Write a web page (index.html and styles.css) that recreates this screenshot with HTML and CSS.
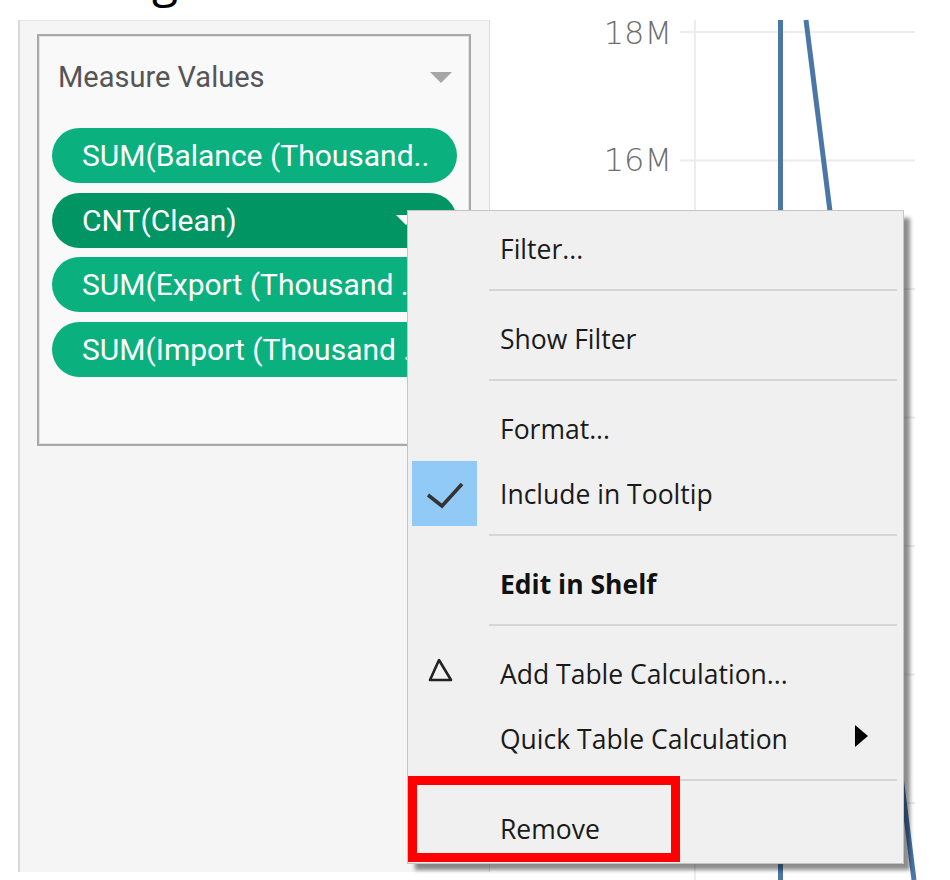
FILE: index.html
```html
<!DOCTYPE html>
<html>
<head>
<meta charset="utf-8">
<link rel="stylesheet" href="styles.css">
</head>
<body>
<div class="page">
  <div class="left">
    <div class="topstrip"><span class="heading">g</span></div>
    <div class="panel">
      <div class="card">
        <div class="card-head">
          <span class="card-title">Measure Values</span>
          <span class="caret"></span>
        </div>
        <div class="pills">
          <div class="pill"><span class="pill-text">SUM(Balance (Thousand..</span></div>
          <div class="pill active"><span class="pill-text">CNT(Clean)</span><span class="pill-caret"></span></div>
          <div class="pill"><span class="pill-text">SUM(Export (Thousand ..</span></div>
          <div class="pill"><span class="pill-text">SUM(Import (Thousand ..</span></div>
        </div>
      </div>
    </div>
  </div>
  <div class="chart">
    <svg class="chart-svg" width="460" height="880" viewBox="490 0 460 880">
      <g class="grid">
        <line x1="695" y1="20" x2="695" y2="880"/>
        <line x1="680" y1="32" x2="915" y2="32"/>
        <line x1="680" y1="160.5" x2="915" y2="160.5"/>
        <line x1="680" y1="289" x2="915" y2="289"/>
        <line x1="680" y1="417.5" x2="915" y2="417.5"/>
        <line x1="680" y1="546" x2="915" y2="546"/>
        <line x1="680" y1="674.5" x2="915" y2="674.5"/>
        <line x1="680" y1="803" x2="915" y2="803"/>
      </g>
      <text class="axis-label" x="672" y="44">18M</text>
      <text class="axis-label" x="672" y="171">16M</text>
      <line class="series" x1="780.5" y1="20" x2="780.5" y2="880"/>
      <line class="series" x1="806" y1="20" x2="914" y2="880"/>
    </svg>
  </div>

  <div class="menu">
    <div class="item"><span class="icon"></span><span class="label">Filter...</span></div>
    <div class="sep"></div>
    <div class="item"><span class="icon"></span><span class="label">Show Filter</span></div>
    <div class="sep"></div>
    <div class="item"><span class="icon"></span><span class="label">Format...</span></div>
    <div class="item"><span class="icon"><span class="checked">
      <svg width="65" height="65" viewBox="0 0 65 65"><polyline points="16,34 30,45 50,23" fill="none" stroke="#333" stroke-width="3.5"/></svg>
    </span></span><span class="label">Include in Tooltip</span></div>
    <div class="sep"></div>
    <div class="item"><span class="icon"></span><span class="label bold">Edit in Shelf</span></div>
    <div class="sep"></div>
    <div class="item"><span class="icon delta">
      <svg width="26" height="26" viewBox="0 0 26 26"><polygon points="12,2 3,22 24,22" fill="none" stroke="#222" stroke-width="2.6" stroke-linejoin="round"/></svg>
    </span><span class="label">Add Table Calculation...</span></div>
    <div class="item"><span class="icon"></span><span class="label">Quick Table Calculation</span><span class="submenu"></span></div>
    <div class="sep"></div>
    <div class="item"><span class="icon"></span><span class="label">Remove</span></div>
  </div>
  <div class="highlight-box"></div>
</div>
</body>
</html>
```
FILE: styles.css
```css
html, body {
  margin: 0;
  padding: 0;
  background: #ffffff;
}

.page {
  position: relative;
  width: 950px;
  height: 880px;
  display: flex;
  overflow: hidden;
  background: #ffffff;
}

.left {
  width: 490px;
  flex: none;
  display: flex;
  flex-direction: column;
}

.topstrip {
  height: 20px;
  overflow: hidden;
  padding-left: 152px;
}

.heading {
  display: block;
  font-family: "Open Sans", sans-serif;
  font-size: 48px;
  line-height: 48px;
  margin-top: -45px;
  color: #000;
}

.panel {
  margin-left: 18px;
  width: 469px;
  height: 851px;
  background: #f5f5f5;
  border-left: 2px solid #d9d9d9;
  border-right: 1px solid #dcdcdc;
  border-top: 1px solid #e6e6e6;
}

.card {
  margin: 13px 0 0 17px;
  width: 430px;
  height: 408px;
  border: 2px solid #a9a9a9;
  box-shadow: inset 0 0 0 1px #e4e4e4;
  background: #f9f9f9;
}

.card-head {
  height: 82px;
  display: flex;
  align-items: center;
  padding: 0 17px 0 19px;
}

.card-title {
  font-family: Roboto, sans-serif;
  font-size: 29px;
  color: #555555;
}

.caret {
  margin-left: auto;
  width: 0;
  height: 0;
  border-left: 11px solid transparent;
  border-right: 11px solid transparent;
  border-top: 11px solid #a6a6a6;
}

.pills {
  padding: 10px 12px 0 13px;
  display: flex;
  flex-direction: column;
  gap: 9.5px;
}

.pill {
  height: 55px;
  border-radius: 28px;
  background: #0bb07f;
  display: flex;
  align-items: center;
  padding-left: 30px;
  overflow: hidden;
}

.pill.active {
  background: #009563;
}

.pill-text {
  font-family: Roboto, sans-serif;
  font-size: 30px;
  color: #ffffff;
  white-space: nowrap;
}

.pill-caret {
  margin-left: auto;
  margin-right: 41px;
  width: 0;
  height: 0;
  border-left: 10px solid transparent;
  border-right: 10px solid transparent;
  border-top: 10px solid #ffffff;
}

.chart {
  flex: 1;
  background: #ffffff;
}

.chart-svg {
  display: block;
}

.grid line {
  stroke: #ececec;
  stroke-width: 2;
}

.axis-label {
  font-family: "DejaVu Sans", sans-serif;
  font-size: 32px;
  font-weight: 300;
  fill: #6e6e6e;
  text-anchor: end;
}

.series {
  stroke: #4a76a8;
  stroke-width: 5;
}

/* context menu overlay */
.menu {
  position: absolute;
  left: 407px;
  top: 210px;
  width: 495px;
  height: 647px;
  border: 1px solid #c4c4c4;
  background: #f0f0f0;
  box-shadow: 7px 7px 4px -1px rgba(0, 0, 0, 0.45);
  padding-top: 5px;
  box-sizing: content-box;
  display: flex;
  flex-direction: column;
}

.item {
  height: 65px;
  flex: none;
  display: flex;
  align-items: center;
}

.icon {
  width: 80px;
  height: 65px;
  flex: none;
  display: flex;
  align-items: center;
}

.checked {
  margin-left: 4px;
  width: 65px;
  height: 65px;
  background: #91c9f7;
  display: block;
}

.checked svg {
  display: block;
}

.delta {
  padding-left: 19px;
  box-sizing: border-box;
  align-items: center;
}

.delta svg {
  display: block;
  margin-top: -5px;
}

.label {
  padding-left: 12px;
  font-family: "Open Sans", sans-serif;
  font-size: 26.5px;
  color: #1a1a1a;
  white-space: nowrap;
}

.label.bold {
  font-weight: 700;
  color: #111;
}

.submenu {
  margin-left: auto;
  margin-right: 35px;
  width: 0;
  height: 0;
  border-top: 11px solid transparent;
  border-bottom: 11px solid transparent;
  border-left: 13px solid #000;
  margin-top: -6px;
}

.sep {
  flex: none;
  height: 2px;
  margin: 8px 6px 15px 81px;
  background: #d6d6d6;
}

.highlight-box {
  position: absolute;
  left: 408px;
  top: 776px;
  width: 272px;
  height: 86px;
  border: 9px solid #ff0000;
  box-sizing: border-box;
}
```
